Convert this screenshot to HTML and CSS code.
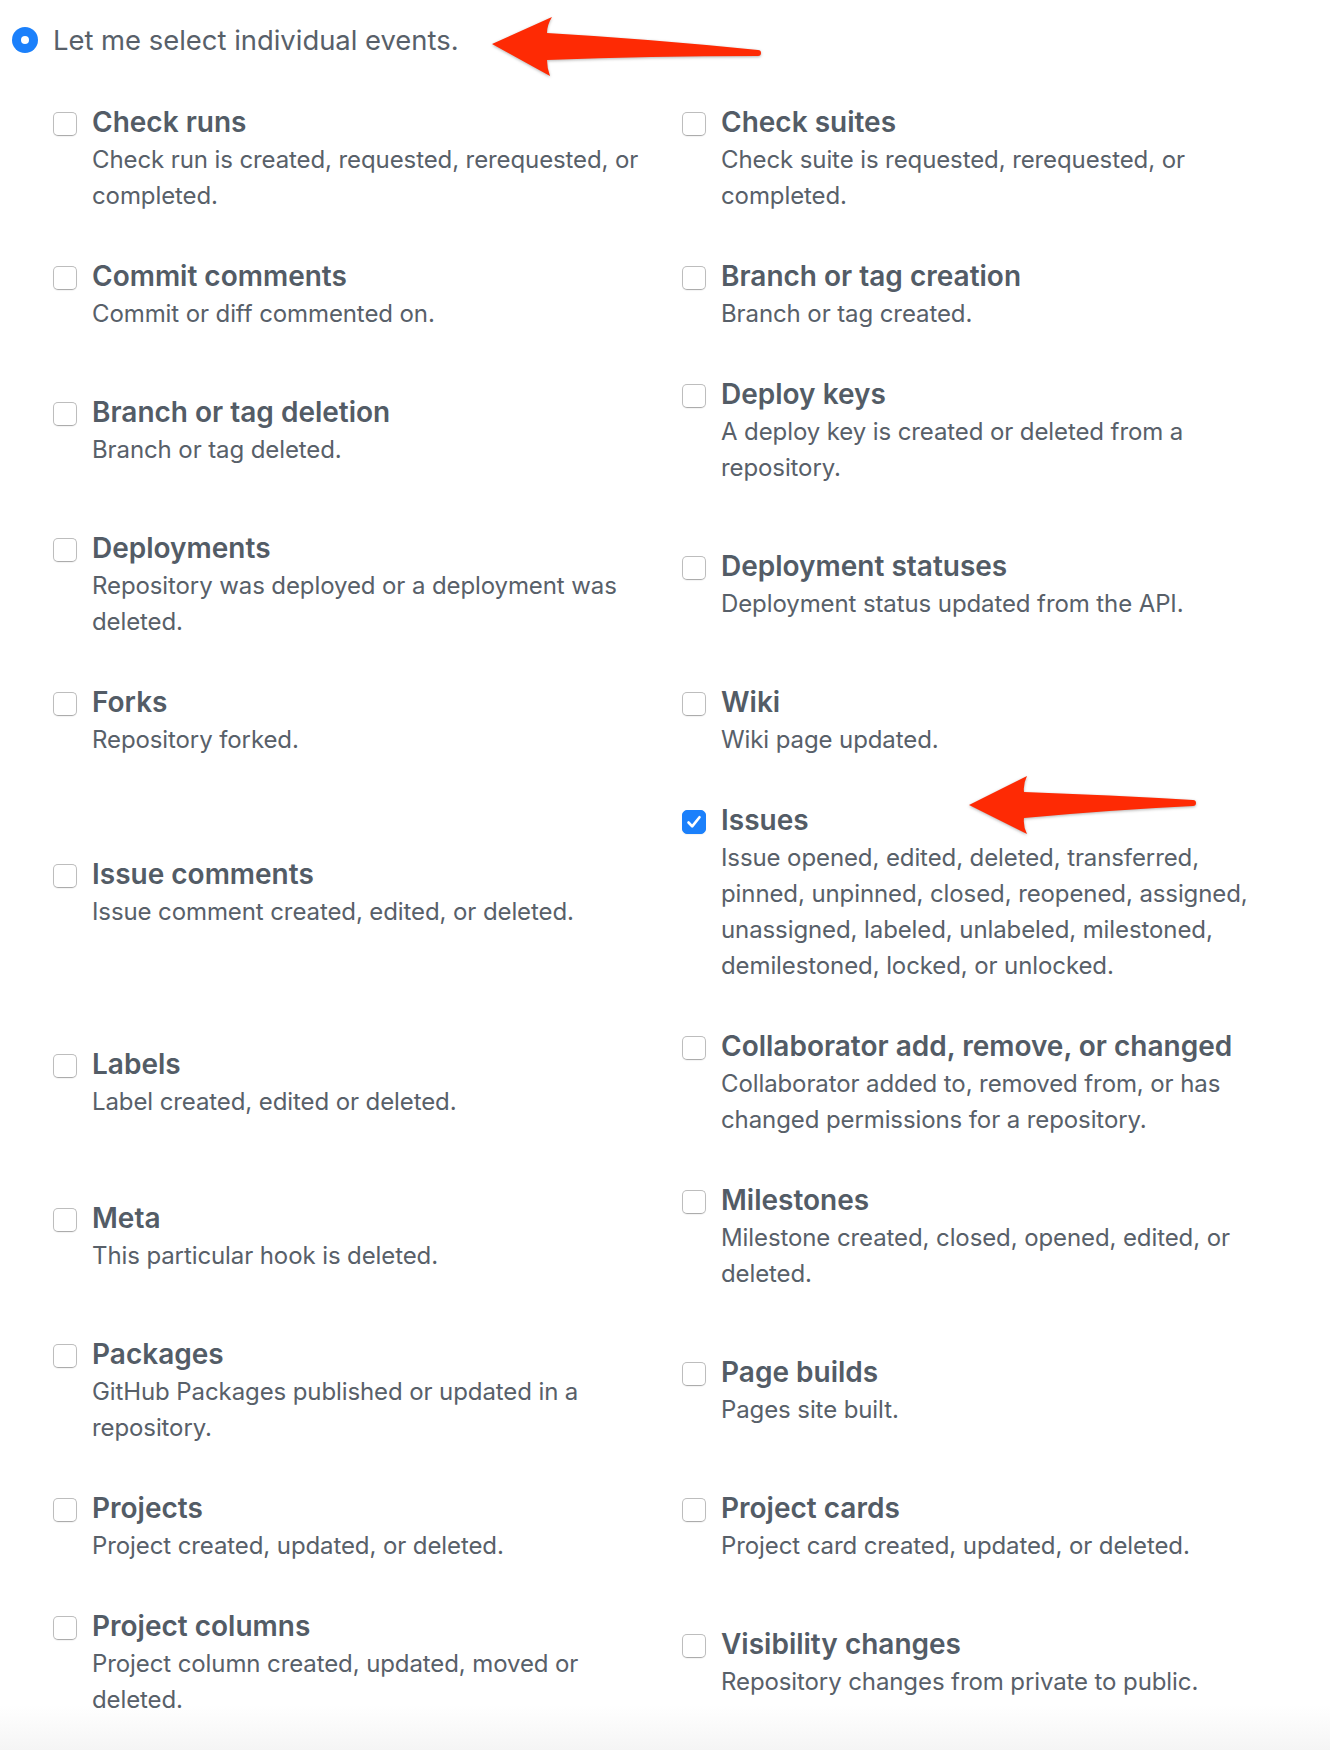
FILE: index.html
```html
<!DOCTYPE html>
<html lang="en">
<head>
<meta charset="utf-8">
<title>Webhook events</title>
<link rel="stylesheet" href="styles.css">
</head>
<body>
<div class="page">
  <div class="radio-row">
    <span class="radio"></span>
    <span class="radio-label">Let me select individual events.</span>
  </div>

  <ul class="events">
    <li class="event"><span class="box"></span><div class="text"><div class="title">Check runs</div><p class="note">Check run is created, requested, rerequested, or completed.</p></div></li>
    <li class="event"><span class="box"></span><div class="text"><div class="title">Check suites</div><p class="note">Check suite is requested, rerequested, or completed.</p></div></li>

    <li class="event"><span class="box"></span><div class="text"><div class="title">Commit comments</div><p class="note">Commit or diff commented on.</p></div></li>
    <li class="event"><span class="box"></span><div class="text"><div class="title">Branch or tag creation</div><p class="note">Branch or tag created.</p></div></li>

    <li class="event"><span class="box"></span><div class="text"><div class="title">Branch or tag deletion</div><p class="note">Branch or tag deleted.</p></div></li>
    <li class="event"><span class="box"></span><div class="text"><div class="title">Deploy keys</div><p class="note">A deploy key is created or deleted from a repository.</p></div></li>

    <li class="event"><span class="box"></span><div class="text"><div class="title">Deployments</div><p class="note">Repository was deployed or a deployment was deleted.</p></div></li>
    <li class="event"><span class="box"></span><div class="text"><div class="title">Deployment statuses</div><p class="note">Deployment status updated from the API.</p></div></li>

    <li class="event"><span class="box"></span><div class="text"><div class="title">Forks</div><p class="note">Repository forked.</p></div></li>
    <li class="event"><span class="box"></span><div class="text"><div class="title">Wiki</div><p class="note">Wiki page updated.</p></div></li>

    <li class="event"><span class="box"></span><div class="text"><div class="title">Issue comments</div><p class="note">Issue comment created, edited, or deleted.</p></div></li>
    <li class="event"><span class="box box-checked"><svg viewBox="0 0 24 24" width="24" height="24"><path d="M6.5 12.5 L10.2 16.4 L17.5 7.2" fill="none" stroke="#fff" stroke-width="2.6" stroke-linecap="round" stroke-linejoin="round"/></svg></span><div class="text"><div class="title">Issues</div><p class="note">Issue opened, edited, deleted, transferred, pinned, unpinned, closed, reopened, assigned, unassigned, labeled, unlabeled, milestoned, demilestoned, locked, or unlocked.</p></div></li>

    <li class="event"><span class="box"></span><div class="text"><div class="title">Labels</div><p class="note">Label created, edited or deleted.</p></div></li>
    <li class="event"><span class="box"></span><div class="text"><div class="title">Collaborator add, remove, or changed</div><p class="note">Collaborator added to, removed from, or has changed permissions for a repository.</p></div></li>

    <li class="event"><span class="box"></span><div class="text"><div class="title">Meta</div><p class="note">This particular hook is deleted.</p></div></li>
    <li class="event"><span class="box"></span><div class="text"><div class="title">Milestones</div><p class="note">Milestone created, closed, opened, edited, or deleted.</p></div></li>

    <li class="event"><span class="box"></span><div class="text"><div class="title">Packages</div><p class="note">GitHub Packages published or updated in a repository.</p></div></li>
    <li class="event"><span class="box"></span><div class="text"><div class="title">Page builds</div><p class="note">Pages site built.</p></div></li>

    <li class="event"><span class="box"></span><div class="text"><div class="title">Projects</div><p class="note">Project created, updated, or deleted.</p></div></li>
    <li class="event"><span class="box"></span><div class="text"><div class="title">Project cards</div><p class="note">Project card created, updated, or deleted.</p></div></li>

    <li class="event"><span class="box"></span><div class="text"><div class="title">Project columns</div><p class="note">Project column created, updated, moved or deleted.</p></div></li>
    <li class="event"><span class="box"></span><div class="text"><div class="title">Visibility changes</div><p class="note">Repository changes from private to public.</p></div></li>
  </ul>

  <svg class="arrow arrow-top" viewBox="480 8 290 80" width="290" height="80">
    <path d="M492 44 L552 17 Q547 25 547 33 Q650 39 758 50 A3 3 0 0 1 758 56 Q650 56 547 60 Q547 68 550 76 Z"/>
  </svg>
  <svg class="arrow arrow-issues" viewBox="960 768 245 75" width="245" height="75">
    <path d="M969 805 L1027 776 Q1023 784 1024 792 Q1110 795 1193 800 A3 3 0 0 1 1193 806 Q1110 810 1024 818 Q1023 826 1027 834 Z"/>
  </svg>
</div>
</body>
</html>
```

FILE: styles.css
```css
* { box-sizing: border-box; }

html, body {
  margin: 0;
  padding: 0;
  background: #fff;
}

.page {
  position: relative;
  width: 1330px;
  min-height: 1750px;
  padding: 20px 0 0 12px;
  font-family: "Inter", "Liberation Sans", sans-serif;
  color: #586069;
  background: linear-gradient(to bottom, #fff 0, #fff 1705px, #f5f5f5 1750px);
}

.radio-row {
  display: flex;
  align-items: center;
  height: 40px;
}

.radio {
  width: 26px;
  height: 26px;
  border-radius: 50%;
  background: #1b80fb;
  display: flex;
  align-items: center;
  justify-content: center;
  margin-right: 15px;
}

.radio::after {
  content: "";
  width: 8px;
  height: 8px;
  border-radius: 50%;
  background: #fff;
}

.radio-label {
  font-size: 27.4px;
  line-height: 40px;
  color: #586069;
}

.events {
  list-style: none;
  margin: 42px 0 0 41px;
  padding: 0;
  display: grid;
  grid-template-columns: 629px 629px;
  row-gap: 42px;
  align-items: center;
}

.event {
  display: flex;
  align-items: flex-start;
}

.box {
  flex: none;
  width: 24px;
  height: 24px;
  margin-top: 10px;
  margin-right: 15px;
  border: 1px solid #bdbdbd;
  border-bottom-color: #acacac;
  border-radius: 5px;
  background: #fff;
  box-shadow: 0 1px 1px rgba(0, 0, 0, 0.05);
}

.box-checked {
  border-color: #1b80fb;
  background: #1b80fb;
  display: flex;
  align-items: center;
  justify-content: center;
}

.box-checked svg {
  display: block;
  margin: -1px;
}

.text {
  max-width: 560px;
}

.title {
  font-size: 28px;
  font-weight: 600;
  line-height: 40px;
  color: #535c66;
}

.note {
  margin: 0;
  font-size: 24px;
  line-height: 36px;
  letter-spacing: -0.1px;
  color: #586069;
}

.arrow {
  position: absolute;
  fill: #fe2a04;
  filter: drop-shadow(0 1px 1.5px rgba(0, 0, 0, 0.3));
}

.arrow-top {
  left: 480px;
  top: 8px;
}

.arrow-issues {
  left: 960px;
  top: 768px;
}
```
